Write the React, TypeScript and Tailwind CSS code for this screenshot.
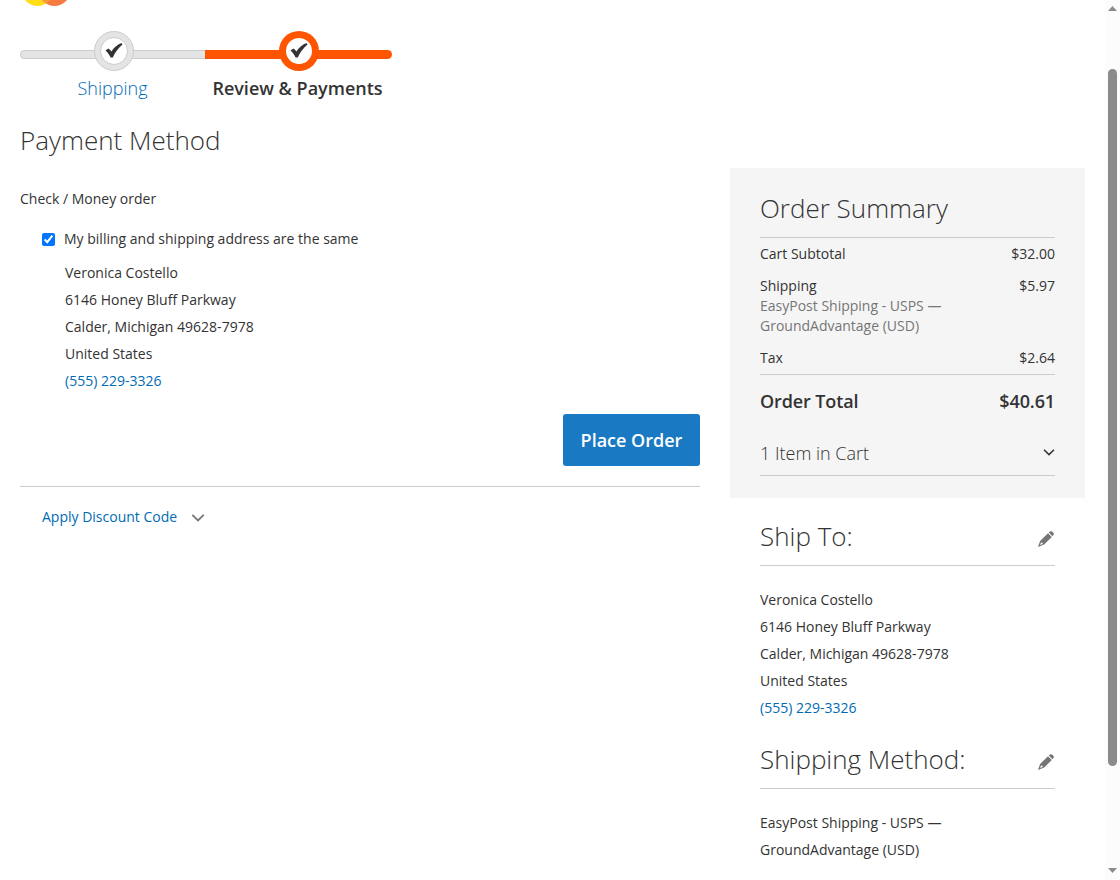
import type { ReactNode } from "react";

const address = ["Veronica Costello", "6146 Honey Bluff Parkway", "Calder, Michigan 49628-7978", "United States"];

const CheckMark = () => (
  <svg width="18" height="15" viewBox="0 0 17 15" fill="#333">
    <path d="M0 7.6 L2.9 5.5 C4 6.1 5 7.1 5.9 8.4 C8.4 4.6 11.6 1.8 16 0 L17 1.5 C12.9 4.8 9.9 9 7.3 14.5 L5.1 14.5 C3.8 11.8 2.2 9.6 0 7.6 Z" />
  </svg>
);

const Chevron = ({ className, width, height }: { className: string; width: number; height: number }) => (
  <svg className={className} width={width} height={height} viewBox="0 0 13 8" fill="none" stroke="currentColor" strokeWidth="1.8">
    <path d="M0.8 0.9 L6.5 6.4 L12.2 0.9" />
  </svg>
);

const Pencil = () => (
  <svg width="16" height="16" viewBox="0 0 16 16" fill="#757575">
    <path d="M10.9 1.6 L12 0.6 C12.8 0 13.7 0 14.4 0.7 L15.3 1.7 C16 2.5 16 3.4 15.4 4.1 L14.4 5.2 Z" />
    <path fillRule="evenodd" d="M10 2.3 L13.8 6 L6.2 13.6 L0 16 L2.1 10 Z M3 11.5 L2.2 13.9 L4.7 13 L4.3 11.8 Z" />
  </svg>
);

const Address = () => (
  <div className="leading-[27px]">
    {address.map((line) => (
      <div key={line}>{line}</div>
    ))}
    <a className="text-[#006bb4]">(555) 229-3326</a>
  </div>
);

const SideHeading = ({ children }: { children: ReactNode }) => (
  <div className="flex h-[51px] items-start justify-between border-b border-[#ccc]">
    <h2 className="pt-[3px] text-[26px] leading-9 font-light">{children}</h2>
    <button className="mt-4 mr-px">
      <Pencil />
    </button>
  </div>
);

const Progress = () => (
  <ol className="mt-[21px] flex text-lg leading-6">
    <li className="w-[185px]">
      <div className="relative flex h-10 justify-center">
        <div className="absolute inset-x-0 top-[19px] h-[9px] rounded-l-full border border-r-0 border-[#ccc] bg-[#e4e4e4]" />
        <div className="relative left-[1px] flex size-10 items-center justify-center rounded-full border border-[#ccc] bg-[#e4e4e4]">
          <div className="flex size-7 items-center justify-center rounded-full border border-[#ccc] bg-white pb-0.5">
            <CheckMark />
          </div>
        </div>
      </div>
      <div className="mt-[5px] text-center font-light text-[#006bb4]">Shipping</div>
    </li>
    <li className="w-[187px]">
      <div className="relative flex h-10 justify-center">
        <div className="absolute inset-x-0 top-[19px] h-[9px] rounded-r-full bg-[#ff5501]" />
        <div className="relative flex size-10 items-center justify-center rounded-full bg-[#ff5501]">
          <div className="flex size-[26px] items-center justify-center rounded-full bg-white pb-0.5">
            <CheckMark />
          </div>
        </div>
      </div>
      <div className="mt-[5px] pr-0.5 text-center font-semibold">Review &amp; Payments</div>
    </li>
  </ol>
);

const Summary = () => (
  <section className="h-[330px] bg-[#f5f5f5] px-[30px]">
    <h2 className="h-[70px] border-b border-[#ccc] pt-[22px] text-[26px] leading-9 font-light">Order Summary</h2>
    <dl className="h-[137px] border-b border-[#ccc] pt-1.5">
      <div className="flex justify-between pb-3">
        <dt>Cart Subtotal</dt>
        <dd>$32.00</dd>
      </div>
      <div className="flex justify-between pb-3">
        <dt>
          Shipping
          <div className="w-[200px] text-[#757575]">EasyPost Shipping - USPS — GroundAdvantage (USD)</div>
        </dt>
        <dd>$5.97</dd>
      </div>
      <div className="flex justify-between">
        <dt>Tax</dt>
        <dd>$2.64</dd>
      </div>
    </dl>
    <div className="flex h-[52px] items-center justify-between text-lg font-semibold tracking-[-0.12px]">
      <span>Order Total</span>
      <span>$40.61</span>
    </div>
    <div className="flex h-[49px] items-center justify-between border-b border-[#ccc] pt-0.5">
      <span className="pt-0.5 text-lg font-light">1 Item in Cart</span>
      <Chevron className="text-[#333]" width={12} height={7} />
    </div>
  </section>
);

export default function App() {
  return (
    <div className="flex h-[880px] overflow-hidden bg-white font-['Open_Sans',sans-serif] text-sm leading-5 text-[#333]">
      <main className="ml-5 w-[680px]">
        <svg className="block" width="60" height="10" viewBox="0 0 60 10">
          <circle cx="17.5" cy="-10" r="16" fill="#ffde17" />
          <circle cx="34.5" cy="-10" r="16" fill="#f47b42" />
          <path d="M26 -23.5 A16 16 0 0 1 26 3.5 A16 16 0 0 1 26 -23.5 Z" fill="#f89a35" />
        </svg>
        <Progress />
        <h1 className="mt-[22px] text-[26px] leading-9 font-light">Payment Method</h1>
        <div className="mt-[31px]">Check / Money order</div>
        <label className="mt-5 ml-[22px] flex items-center">
          <input type="checkbox" defaultChecked className="mr-[9px] size-[13px]" />
          My billing and shipping address are the same
        </label>
        <div className="mt-2.5 ml-[45px]">
          <Address />
        </div>
        <div className="mt-5 flex h-[73px] items-start justify-end border-b border-[#ccc]">
          <button className="h-[52px] w-[137px] rounded-[3px] bg-[#1979c3] text-lg font-semibold text-white">Place Order</button>
        </div>
        <div className="mt-5 ml-[22px] flex items-center text-[#006bb4]">
          Apply Discount Code
          <Chevron className="mt-0.5 ml-3.5 text-[#757575]" width={14} height={8} />
        </div>
      </main>
      <aside className="mt-[168px] ml-[30px] w-[355px]">
        <Summary />
        <section className="mt-[17px] px-[30px]">
          <SideHeading>Ship To:</SideHeading>
          <div className="mt-5">
            <Address />
          </div>
        </section>
        <section className="mt-[17px] px-[30px]">
          <SideHeading>Shipping Method:</SideHeading>
          <div className="mt-5 w-[200px] leading-[27px]">EasyPost Shipping - USPS — GroundAdvantage (USD)</div>
        </section>
      </aside>
      {/* scrollbar */}
      <div className="ml-auto flex h-[880px] w-[15px] flex-col items-center bg-[#fcfcfc]">
        <svg className="mt-1.5 shrink-0" width="9" height="5" viewBox="0 0 9 5" fill="#8b8b8b">
          <path d="M4.5 0 L9 5 L0 5 Z" />
        </svg>
        <div className="mt-[58px] h-[697px] w-[9px] shrink-0 rounded-full bg-[#8b8b8b]" />
        <svg className="mt-[102px] shrink-0" width="9" height="5" viewBox="0 0 9 5" fill="#8b8b8b">
          <path d="M0 0 L9 0 L4.5 5 Z" />
        </svg>
      </div>
    </div>
  );
}
